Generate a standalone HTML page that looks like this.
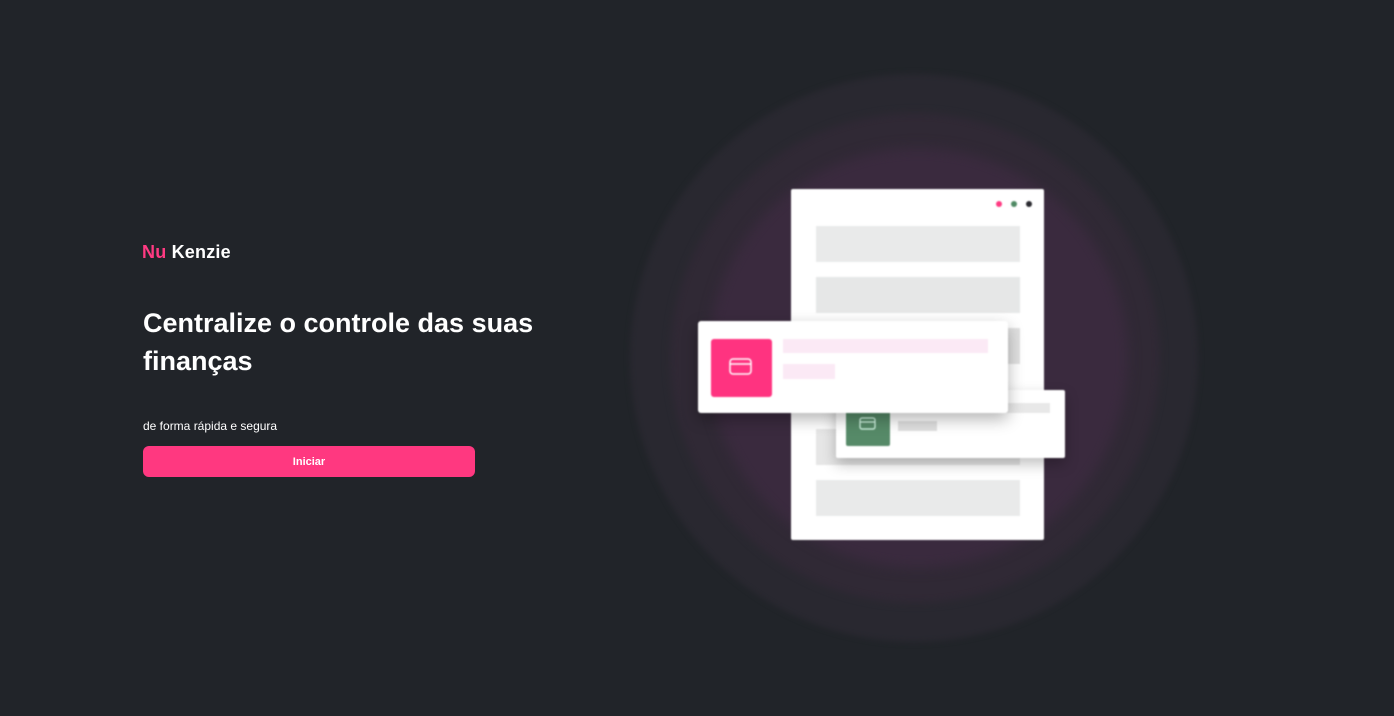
<!DOCTYPE html>
<html><head><meta charset="utf-8"><style>
*{margin:0;padding:0;box-sizing:border-box}
body{width:1394px;height:716px;background:#212429;position:relative;overflow:hidden;font-family:"Liberation Sans",sans-serif}
.a{position:absolute}
.c{position:absolute;border-radius:50%}
.ill{position:absolute;left:0;top:0;width:1394px;height:716px;filter:blur(0.7px)}
</style></head><body>
<div class="a" style="left:142px;top:242px;font-size:18px;font-weight:bold;color:#fff;letter-spacing:0.2px"><span style="color:#ff3a82">Nu</span> Kenzie</div>
<div class="a" style="left:143px;top:304px;font-size:27px;font-weight:bold;color:#fff;line-height:38px;width:420px">Centralize o controle das suas finanças</div>
<div class="a" style="left:143px;top:419px;font-size:12px;color:#fff">de forma rápida e segura</div>
<div class="a" style="left:143px;top:446px;width:332px;height:31px;background:#ff3880;border-radius:6px;color:#fff;font-size:11px;font-weight:bold;text-align:center;line-height:32px">Iniciar</div>

<div class="c" style="left:630px;top:74px;width:568px;height:568px;background:#292830;filter:blur(3px)"></div>
<div class="c" style="left:670px;top:113px;width:490px;height:490px;background:#302935;filter:blur(4px)"></div>
<div class="c" style="left:708px;top:148px;width:420px;height:420px;background:#3a2a3e;filter:blur(6px)"></div>

<div class="ill">
<div class="a" style="left:791px;top:189px;width:253px;height:351px;background:#fff;border-radius:2px"></div>
<div class="c" style="left:996px;top:201px;width:6px;height:6px;background:#ff3a82"></div>
<div class="c" style="left:1011px;top:201px;width:6px;height:6px;background:#4f8a64"></div>
<div class="c" style="left:1026px;top:201px;width:6px;height:6px;background:#2a2a30"></div>
<div class="a" style="left:816px;top:226px;width:204px;height:36px;background:#e9eaea"></div>
<div class="a" style="left:816px;top:277px;width:204px;height:36px;background:#e6e7e7"></div>
<div class="a" style="left:816px;top:328px;width:204px;height:36px;background:#e0e0e0"></div>
<div class="a" style="left:816px;top:429px;width:204px;height:36px;background:#e6e6e6"></div>
<div class="a" style="left:816px;top:480px;width:204px;height:36px;background:#e9eaea"></div>

<div class="a" style="left:836px;top:390px;width:229px;height:68px;background:#fff;border-radius:2px;box-shadow:0 6px 14px rgba(0,0,0,.25)"></div>
<div class="a" style="left:846px;top:405px;width:44px;height:41px;background:#568a68;border-radius:2px"></div>
<svg class="a" style="left:859px;top:417px" width="18" height="14"><rect x="1" y="1" width="15" height="11" rx="2" fill="none" stroke="#dfe" stroke-width="1.2"/><line x1="1" y1="5" x2="16" y2="5" stroke="#dfe" stroke-width="1.2"/></svg>
<div class="a" style="left:900px;top:403px;width:150px;height:10px;background:#e8e8e8"></div>
<div class="a" style="left:898px;top:421px;width:39px;height:10px;background:#e0e0e0"></div>

<div class="a" style="left:698px;top:321px;width:310px;height:92px;background:#fff;border-radius:3px;box-shadow:0 6px 16px rgba(0,0,0,.3)"></div>
<div class="a" style="left:711px;top:339px;width:61px;height:58px;background:#ff3380;border-radius:3px"></div>
<svg class="a" style="left:729px;top:358px" width="24" height="20"><rect x="1" y="1" width="21" height="15" rx="3" fill="none" stroke="#fff" stroke-width="1.5"/><line x1="1" y1="6" x2="22" y2="6" stroke="#fff" stroke-width="1.5"/></svg>
<div class="a" style="left:783px;top:339px;width:205px;height:14px;background:#fbe9f5"></div>
<div class="a" style="left:783px;top:364px;width:52px;height:15px;background:#fbe9f5"></div>
</div>
</body></html>
